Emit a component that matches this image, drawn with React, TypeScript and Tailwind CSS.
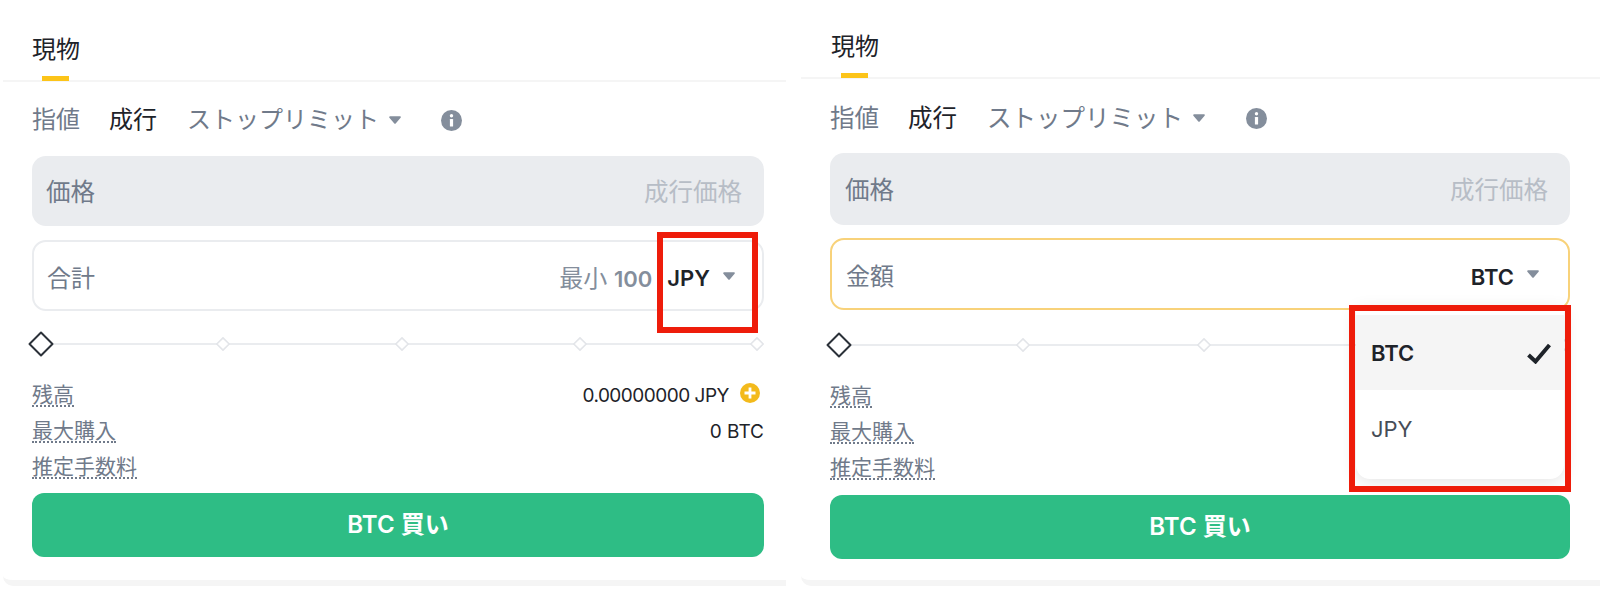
import React from 'react'

const FONT = "font-['Inter','Noto_Sans_CJK_JP',sans-serif]"

function Caret({ className = '' }: { className?: string }) {
  return (
    <svg className={className} width="12" height="8" viewBox="0 0 12 8" fill="#848e9c">
      <path d="M1.1 0.3h9.8c.8 0 1.2.9.7 1.4L6.7 7.4c-.4.4-1 .4-1.4 0L.4 1.7C-.1 1.2.3.3 1.1.3z" />
    </svg>
  )
}

function InfoIcon() {
  return (
    <svg width="21" height="21" viewBox="0 0 21 21" className="block">
      <circle cx="10.5" cy="10.5" r="10.5" fill="#848e9c" />
      <circle cx="10.5" cy="5.8" r="1.7" fill="#fff" />
      <rect x="8.9" y="9" width="3.2" height="7.5" rx="0.6" fill="#fff" />
    </svg>
  )
}

function Diamond({ size, stroke, width }: { size: number; stroke: string; width: number }) {
  return (
    <svg width={size} height={size} viewBox="0 0 26 26" className="block shrink-0">
      <path
        d="M13 1.5 24.5 13 13 24.5 1.5 13z"
        fill="#fff"
        stroke={stroke}
        strokeWidth={width}
        strokeLinejoin="round"
      />
    </svg>
  )
}

function Slider() {
  return (
    <div className="relative flex items-center justify-between h-[26px] -mx-[4px] w-[calc(100%+4px)]">
      <div className="absolute left-[10px] right-[6px] top-[12px] h-[2px] bg-[#eaecef]" />
      <div className="relative"><Diamond size={26} stroke="#2b3139" width={2} /></div>
      <div className="relative -translate-x-[2px]"><Diamond size={14} stroke="#e3e5e9" width={3} /></div>
      <div className="relative"><Diamond size={14} stroke="#e3e5e9" width={3} /></div>
      <div className="relative"><Diamond size={14} stroke="#e3e5e9" width={3} /></div>
      <div className="relative"><Diamond size={14} stroke="#e3e5e9" width={3} /></div>
    </div>
  )
}

function PlusIcon() {
  return (
    <svg width="20" height="20" viewBox="0 0 20 20" className="block shrink-0">
      <circle cx="10" cy="10" r="10" fill="#f3ba1c" />
      <path d="M10 4.5v11M4.5 10h11" stroke="#fff" strokeWidth="2.8" />
    </svg>
  )
}

function Label({ children }: { children: React.ReactNode }) {
  return (
    <span className="text-[21px] leading-[20px] text-[#707a8a] border-b-2 border-dotted border-[#707a8a]">
      {children}
    </span>
  )
}

function TypeRow({ fontSize, infoGap }: { fontSize: string; infoGap: string }) {
  return (
    <div className={`flex items-center h-[30px] leading-[30px] ${fontSize}`}>
      <span className="text-[#707a8a]">指値</span>
      <span className="ml-[29px] text-[#1e2329]">成行</span>
      <span className="ml-[30px] text-[#707a8a]">ストップリミット</span>
      <Caret className="ml-[10px]" />
      <span className={infoGap}><InfoIcon /></span>
    </div>
  )
}

export default function App() {
  return (
    <div className={`relative w-[1600px] h-[593px] overflow-hidden bg-white ${FONT}`}>
      <div className="flex">
        {/* left card */}
        <div className="relative mt-[10px] ml-[3px] w-[783px] h-[576px] bg-white rounded-bl-[10px] border-b-[6px] border-[#f5f5f5]">
          <div className="relative h-[72px] border-b-2 border-[#f5f5f5] pl-[29px] pt-[25px]">
            <span className="text-[24px] leading-[30px] text-[#1e2329]">現物</span>
            <div className="absolute left-[39px] bottom-[-1px] w-[27px] h-[5px] bg-[#fcc419]" />
          </div>
          <div className="flex flex-col pl-[29px] pr-[22px] pt-[23px]">
            <TypeRow fontSize="text-[24px]" infoGap="ml-[40px]" />
            <div className="mt-[21px] flex items-center justify-between h-[70px] rounded-[14px] bg-[#eaecef] pl-[14px] pr-[22px] pt-[2px] text-[24.5px]">
              <span className="text-[#707a8a]">価格</span>
              <span className="text-[#b7bdc6]">成行価格</span>
            </div>
            <div className="mt-[14px] flex items-center h-[71px] rounded-[14px] border-2 border-[#eaecef] px-[13px] pt-[6px] text-[24px]">
              <span className="text-[#707a8a]">合計</span>
              <span className="ml-auto text-[#848e9c]">最小 <span className="font-semibold text-[22px]">100</span></span>
              <span className="ml-[15px] font-semibold text-[22px] text-[#1e2329]">JPY</span>
              <Caret className="ml-[13px] mr-[14px] -mt-[6px]" />
            </div>
            <div className="mt-[20px]"><Slider /></div>
            <div className="mt-[26px] flex flex-col gap-[10px]">
              <div className="flex items-center justify-between h-[26px]">
                <Label>残高</Label>
                <span className="flex items-center text-[19px] tracking-[-0.5px] text-[#1e2329]">
                  0.00000000 JPY
                  <span className="ml-[11px] mr-[4px] -mt-[6px]"><PlusIcon /></span>
                </span>
              </div>
              <div className="flex items-center justify-between h-[26px]">
                <Label>最大購入</Label>
                <span className="text-[19px] text-[#1e2329]">0 BTC</span>
              </div>
              <div className="flex items-center h-[26px]">
                <Label>推定手数料</Label>
              </div>
            </div>
            <div className="mt-[12px] flex items-center justify-center h-[64px] rounded-[12px] bg-[#2ebd85] text-[24px] font-semibold text-white">
              BTC 買い
            </div>
          </div>
          {/* annotation */}
          <div className="absolute left-[654px] top-[222px] w-[101px] h-[101px] border-[6px] border-[#ee1c0a]" />
        </div>

        {/* right card */}
        <div className="relative mt-[10px] ml-[15px] w-[799px] h-[576px] bg-white rounded-bl-[10px] border-b-[6px] border-[#f5f5f5]">
          <div className="relative h-[69px] border-b-2 border-[#f5f5f5] pl-[30px] pt-[22px]">
            <span className="text-[24px] leading-[30px] text-[#1e2329]">現物</span>
            <div className="absolute left-[40px] bottom-[-1px] w-[27px] h-[5px] bg-[#fcc419]" />
          </div>
          <div className="flex flex-col pl-[29px] pr-[30px] pt-[24px]">
            <TypeRow fontSize="text-[24.5px]" infoGap="ml-[41px]" />
            <div className="mt-[20px] flex items-center justify-between h-[72px] rounded-[14px] bg-[#eaecef] pl-[15px] pr-[22px] pt-[2px] text-[24.5px]">
              <span className="text-[#707a8a]">価格</span>
              <span className="text-[#b7bdc6]">成行価格</span>
            </div>
            <div className="mt-[13px] flex items-center h-[72px] rounded-[14px] border-2 border-[#f8d27a] px-[14px] pt-[6px] text-[24px]">
              <span className="text-[#707a8a]">金額</span>
              <span className="ml-auto font-semibold text-[22px] text-[#1e2329]">BTC</span>
              <Caret className="ml-[13px] mr-[15px] -mt-[6px]" />
            </div>
            <div className="mt-[22px]"><Slider /></div>
            <div className="mt-[26px] flex flex-col gap-[10px]">
              <div className="flex items-center h-[26px]"><Label>残高</Label></div>
              <div className="flex items-center h-[26px]"><Label>最大購入</Label></div>
              <div className="flex items-center h-[26px]"><Label>推定手数料</Label></div>
            </div>
            <div className="mt-[13px] flex items-center justify-center h-[64px] rounded-[12px] bg-[#2ebd85] text-[24px] font-semibold text-white">
              BTC 買い
            </div>
          </div>
          {/* dropdown + annotation */}
          <div className="absolute left-[555px] top-[299px] w-[208px] h-[170px] rounded-b-[14px] bg-white shadow-[0_2px_18px_rgba(0,0,0,0.12)] overflow-hidden">
            <div className="mt-[6px] flex items-center justify-between h-[75px] bg-[#f5f5f5] pl-[15px] pr-[13px] pt-[2px] text-[22px] font-semibold text-[#1e2329]">
              BTC
              <svg width="24" height="21" viewBox="0 0 24 21">
                <path d="M1.5 12l7 6.5L22.5 2" fill="none" stroke="#1e2329" strokeWidth="4" />
              </svg>
            </div>
            <div className="flex items-center h-[75px] pl-[15px] pt-[3px] text-[22px] text-[#474d57]">JPY</div>
          </div>
          <div className="absolute left-[548px] top-[295px] w-[222px] h-[187px] border-[6px] border-[#ee1c0a]" />
        </div>
      </div>
    </div>
  )
}
